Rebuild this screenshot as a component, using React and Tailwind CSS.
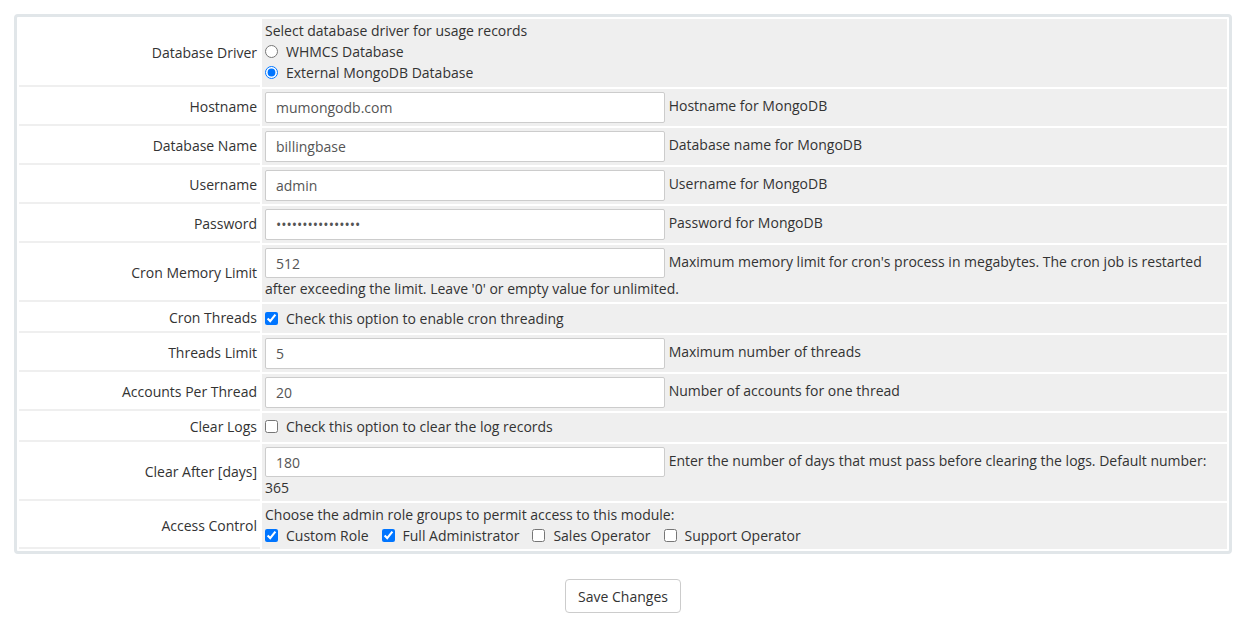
import React from 'react';

const font = { fontFamily: '"Open Sans", "Liberation Sans", sans-serif' };

const Label = ({ children }) => (
  <td className="w-[241px] bg-white border-b-2 border-[#efefef] text-right align-middle px-[3px] py-[3px] text-[#333]">
    {children}
  </td>
);

const Field = ({ children, className = 'py-[3px]' }) => (
  <td className={`bg-[#efefef] align-middle px-[3px] text-[#333] ${className}`}>{children}</td>
);

const TextInput = ({ value, type = 'text', wrap }) => (
  <input
    type={type}
    defaultValue={value}
    className={`inline-block align-middle w-[400px] ${wrap ? 'h-[30px]' : 'h-[31px]'} px-[10px] bg-white border border-[#ccc] rounded-[2px] text-[#555] text-[14px] outline-none`}
  />
);

const InputRow = ({ label, value, desc, type, wrap }) => (
  <tr>
    <Label>{label}</Label>
    <Field className="py-[3px]">
      <TextInput value={value} type={type} wrap={wrap} /> {desc}
    </Field>
  </tr>
);

const Check = ({ checked, children }) => (
  <label className="inline-flex items-center gap-[8px]">
    <input type="checkbox" defaultChecked={checked} className="w-[13px] h-[13px] m-0 accent-[#0075ff]" />
    <span>{children}</span>
  </label>
);

const Radio = ({ checked, children }) => (
  <label className="flex items-center gap-[8px]">
    <input type="radio" name="driver" defaultChecked={checked} className="w-[13px] h-[13px] m-0 accent-[#0075ff]" />
    <span>{children}</span>
  </label>
);

export default function App() {
  return (
    <div className="bg-white min-h-[621px] pt-[14px] text-[14px] leading-[21px]" style={font}>
      <div className="ml-[14px] mr-[8px] border-[3px] border-[#e1e6e9] rounded-[4px] bg-white">
        <table className="w-full border-separate border-spacing-[2px]">
          <tbody>
            <tr>
              <Label>Database Driver</Label>
              <Field className="pt-[1px] pb-[4px]">
                <div>Select database driver for usage records</div>
                <Radio>WHMCS Database</Radio>
                <Radio checked>External MongoDB Database</Radio>
              </Field>
            </tr>
            <InputRow label="Hostname" value="mumongodb.com" desc="Hostname for MongoDB" />
            <InputRow label="Database Name" value="billingbase" desc="Database name for MongoDB" />
            <InputRow label="Username" value="admin" desc="Username for MongoDB" />
            <InputRow label="Password" value="mongopassword123" type="password" desc="Password for MongoDB" />
            <InputRow
              wrap
              label="Cron Memory Limit"
              value="512"
              desc="Maximum memory limit for cron's process in megabytes. The cron job is restarted after exceeding the limit. Leave '0' or empty value for unlimited."
            />
            <tr>
              <Label>Cron Threads</Label>
              <Field>
                <Check checked>Check this option to enable cron threading</Check>
              </Field>
            </tr>
            <InputRow label="Threads Limit" value="5" desc="Maximum number of threads" />
            <InputRow label="Accounts Per Thread" value="20" desc="Number of accounts for one thread" />
            <tr>
              <Label>Clear Logs</Label>
              <Field className="pt-[2px] pb-[3px]">
                <Check>Check this option to clear the log records</Check>
              </Field>
            </tr>
            <InputRow
              wrap
              label="Clear After [days]"
              value="180"
              desc="Enter the number of days that must pass before clearing the logs. Default number: 365"
            />
            <tr>
              <Label>Access Control</Label>
              <Field className="pt-[1px] pb-[3px]">
                <div>Choose the admin role groups to permit access to this module:</div>
                <div className="flex items-center gap-[13px] h-[21px]">
                  <Check checked>Custom Role</Check>
                  <Check checked>Full Administrator</Check>
                  <Check>Sales Operator</Check>
                  <Check>Support Operator</Check>
                </div>
              </Field>
            </tr>
          </tbody>
        </table>
      </div>
      <div className="flex justify-center ml-[14px] mr-[8px] mt-[25px]">
        <button className="h-[34px] px-[12px] bg-white border border-[#ccc] rounded-[4px] text-[#333] text-[14px]">
          Save Changes
        </button>
      </div>
    </div>
  );
}
